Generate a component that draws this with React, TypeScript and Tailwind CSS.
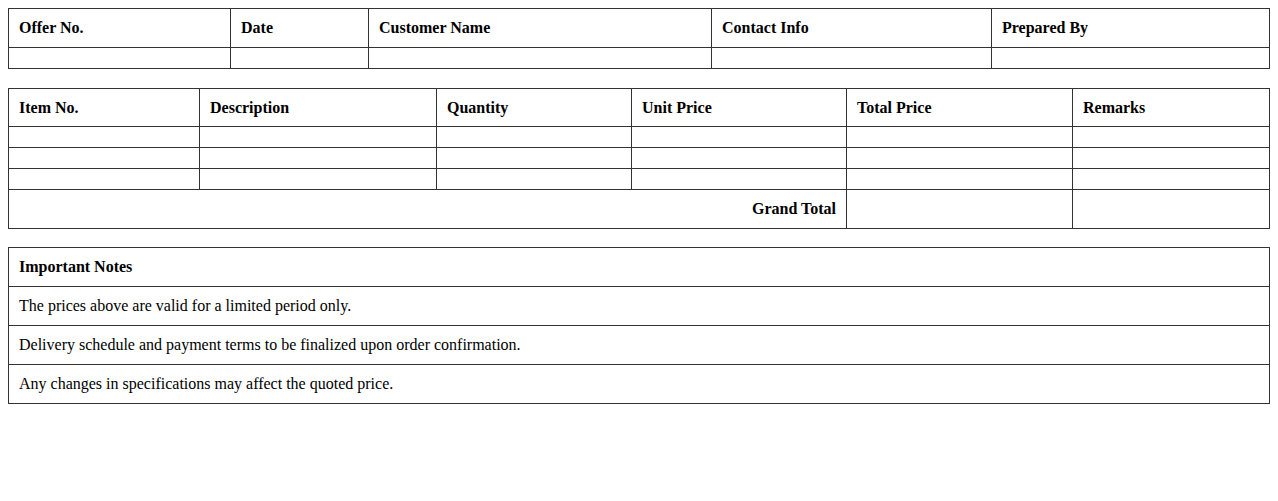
import React from 'react';

const cell = 'border border-[#333] px-[10px] py-[10px] text-left align-middle';
const headCell = 'border border-[#333] px-[10px] py-[9.5px] text-left align-middle';

const App: React.FC = () => {
  const items = [1, 2, 3];

  return (
    <div className="p-2 bg-white text-black text-[16px] leading-[normal] font-['Liberation_Serif','Times_New_Roman',serif]">
      {/* Offer info */}
      <table className="w-full table-fixed border-collapse mb-[19px]">
        <colgroup>
          <col className="w-[222px]" />
          <col className="w-[138px]" />
          <col className="w-[343px]" />
          <col className="w-[280px]" />
          <col />
        </colgroup>
        <thead>
          <tr>
            <th className={cell}>Offer No.</th>
            <th className={cell}>Date</th>
            <th className={cell}>Customer Name</th>
            <th className={cell}>Contact Info</th>
            <th className={cell}>Prepared By</th>
          </tr>
        </thead>
        <tbody>
          <tr>
            <td className={cell}></td>
            <td className={cell}></td>
            <td className={cell}></td>
            <td className={cell}></td>
            <td className={cell}></td>
          </tr>
        </tbody>
      </table>

      {/* Items */}
      <table className="w-full table-fixed border-collapse mb-[18px]">
        <colgroup>
          <col className="w-[191px]" />
          <col className="w-[237px]" />
          <col className="w-[195px]" />
          <col className="w-[215px]" />
          <col className="w-[226px]" />
          <col />
        </colgroup>
        <thead>
          <tr>
            <th className={headCell}>Item No.</th>
            <th className={headCell}>Description</th>
            <th className={headCell}>Quantity</th>
            <th className={headCell}>Unit Price</th>
            <th className={headCell}>Total Price</th>
            <th className={headCell}>Remarks</th>
          </tr>
        </thead>
        <tbody>
          {items.map((i) => (
            <tr key={i}>
              <td className={cell}></td>
              <td className={cell}></td>
              <td className={cell}></td>
              <td className={cell}></td>
              <td className={cell}></td>
              <td className={cell}></td>
            </tr>
          ))}
          <tr>
            <td colSpan={4} className="border border-[#333] p-[10px] text-right font-bold">
              Grand Total
            </td>
            <td className={cell}></td>
            <td className={cell}></td>
          </tr>
        </tbody>
      </table>

      {/* Notes */}
      <table className="w-full border-collapse">
        <thead>
          <tr>
            <th className={cell}>Important Notes</th>
          </tr>
        </thead>
        <tbody>
          <tr>
            <td className={cell}>The prices above are valid for a limited period only.</td>
          </tr>
          <tr>
            <td className={cell}>Delivery schedule and payment terms to be finalized upon order confirmation.</td>
          </tr>
          <tr>
            <td className={cell}>Any changes in specifications may affect the quoted price.</td>
          </tr>
        </tbody>
      </table>
    </div>
  );
};

export default App;
